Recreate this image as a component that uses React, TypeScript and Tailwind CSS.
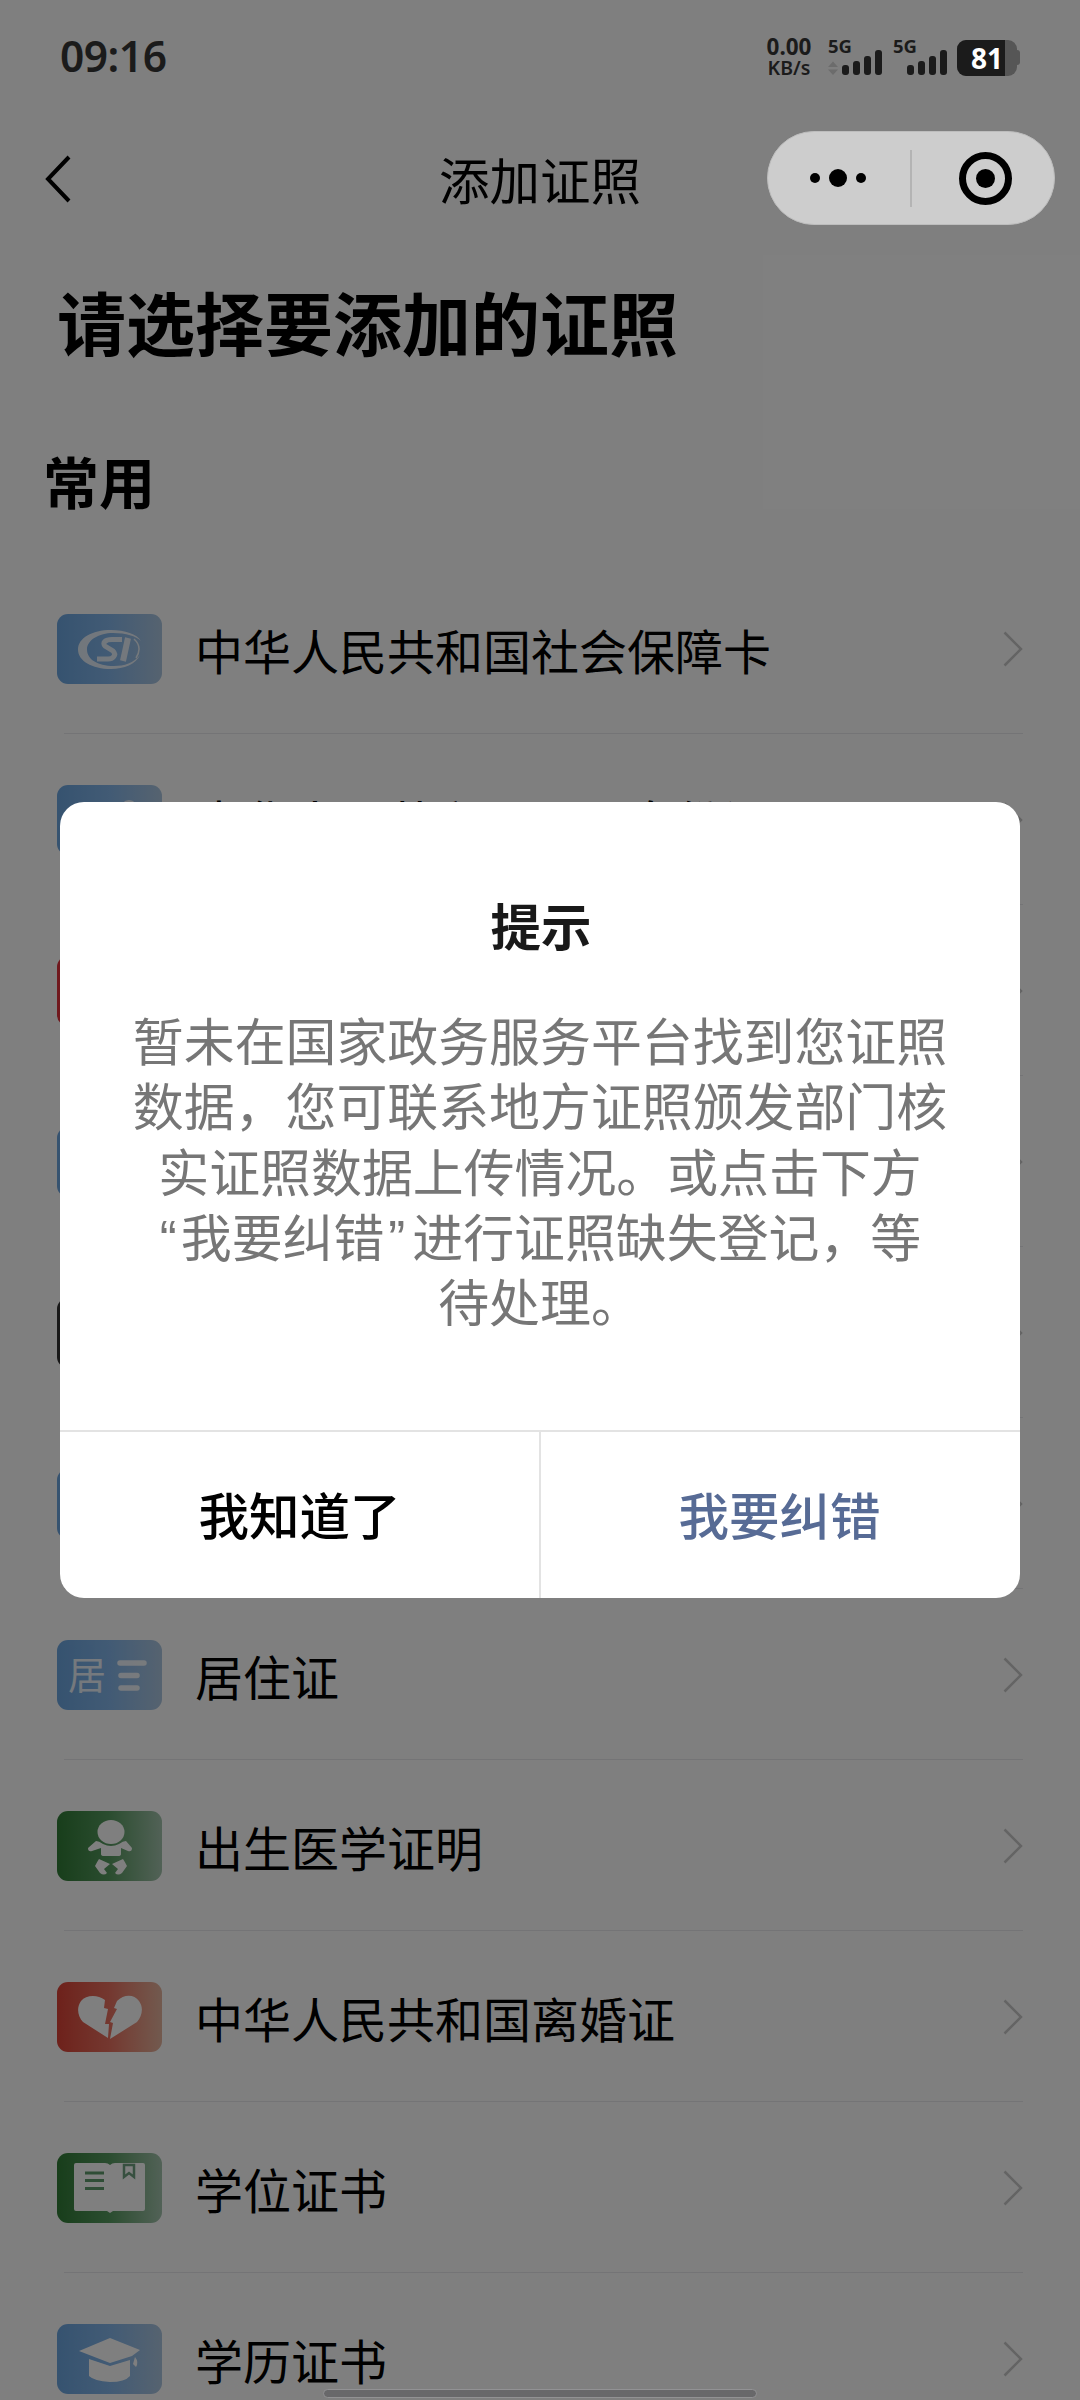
import type { ReactNode } from "react";

type Doc = {
    label: string;
    tile: string;
    icon?: ReactNode;
};

const BLUE = "bg-gradient-to-r from-[#6ca6e0] via-[#84b6ea] to-[#acc6e0]";
const GREEN = "bg-gradient-to-r from-[#307c36] via-[#569a60] to-[#a4c4ae]";
const RED = "bg-gradient-to-r from-[#dc4236] via-[#e87060] to-[#e4b49e]";

function SocialCardIcon() {
    return (
        <svg viewBox="0 0 105 70" className="h-full w-full opacity-80">
            <path
                fill="#fff"
                fillRule="evenodd"
                d="M84 27C80 20 68 16 54 16C35 16 21 24 21 35.500C21 47 35 55 54 55C67 55 79 50 83 41C77 49 67 52 57 52C40 52 30 45 30 35.500C30 26 42 19 56 19C69 19 79 22 84 27Z"
            />
            <path
                fill="none"
                stroke="#fff"
                strokeWidth="5"
                d="M65 25.500H55C48 25.500 45 29 48 32L56 37C60 41 56 45 51 45H40"
            />
            <path fill="none" stroke="#fff" strokeWidth="6" d="M71 24L66 47" />
            <path fill="none" stroke="#fff" strokeWidth="1.500" d="M77 25Q86 33 79 44" />
        </svg>
    );
}

function IdCardIcon() {
    return (
        <svg viewBox="0 0 105 70" className="h-full w-full opacity-80">
            <circle cx="72" cy="24" r="9" fill="#fff" />
        </svg>
    );
}

function ResidenceIcon() {
    return (
        <div className="flex h-full w-full items-center pl-[11px] opacity-85">
            <span className="-mt-[4px] text-[38px] leading-none text-white">居</span>
            <svg viewBox="0 0 32 34" className="ml-[10px] h-[34px] w-[32px]">
                <path stroke="#fff" strokeWidth="5.500" strokeLinecap="round" d="M4 5H28M5 17.500H21M5 30H21" />
            </svg>
        </div>
    );
}

function BabyIcon() {
    return (
        <svg viewBox="0 0 105 70" className="h-full w-full" fill="#fff">
            <ellipse cx="54" cy="21" rx="13.500" ry="12" />
            <path d="M31 37L39 30Q42 30 46 33Q54 37 62 33Q66 30 69 30L75 37Q75 41 71 40L64 37V43Q64 45 61 45H47Q44 45 44 43V37L35 40Q31 41 31 37Z" />
            <path d="M42 48L53 53L47 58L50 62Q47 65 43 62L38 55Q40 51 42 48ZM66 48L55 53L61 58L58 62Q61 65 65 62L70 55Q68 51 66 48Z" />
        </svg>
    );
}

function BrokenHeartIcon() {
    return (
        <svg viewBox="0 0 105 70" className="h-full w-full" fill="#fff">
            <path d="M48 18C40 12 29 13 24 19C19 26 21 35 26 40L51 56L52 42H48L51 27L47 26Z" />
            <path d="M60 19C67 12 77 12 82 19C87 26 85 34 80 40L53 57L56 41L53 40L60 27L57 26Z" />
        </svg>
    );
}

function DegreeIcon() {
    return (
        <svg viewBox="0 0 105 70" className="h-full w-full">
            <path
                fill="#fff"
                d="M19 10H48Q51 10 53 12Q55 10 58 10H86Q88 10 88 12V56Q88 58 86 58H56L53 60L50 58H19Q17 58 17 56V12Q17 10 19 10Z"
            />
            <path fill="none" stroke="#5f9a6c" strokeWidth="3" d="M28 20H47M28 27.500H47M28 35.500H47" />
            <path fill="none" stroke="#6fa080" strokeWidth="2.500" d="M67 12H77V24L72 20L67 24Z" />
        </svg>
    );
}

function GraduationIcon() {
    return (
        <svg viewBox="0 0 105 70" className="h-full w-full" fill="#fff">
            <path d="M53 14L83 26L75 32L53 39L22 27Z" />
            <path d="M32 35L53 42L73 36V52Q68 58 53 58Q37 57 32 52Z" />
            <path d="M78 33Q82 38 79 43L76 40Z" />
        </svg>
    );
}

const DOCS: Doc[] = [
    { label: "中华人民共和国社会保障卡", tile: BLUE, icon: <SocialCardIcon /> },
    { label: "中华人民共和国居民身份证", tile: BLUE, icon: <IdCardIcon /> },
    { label: "", tile: "bg-[#e0303a]" },
    { label: "", tile: BLUE },
    { label: "", tile: "bg-[#303030]" },
    { label: "", tile: BLUE },
    { label: "居住证", tile: BLUE, icon: <ResidenceIcon /> },
    { label: "出生医学证明", tile: GREEN, icon: <BabyIcon /> },
    { label: "中华人民共和国离婚证", tile: RED, icon: <BrokenHeartIcon /> },
    { label: "学位证书", tile: GREEN, icon: <DegreeIcon /> },
    { label: "学历证书", tile: BLUE, icon: <GraduationIcon /> },
];

function DocRow({ doc }: { doc: Doc }) {
    return (
        <li className="h-[171px] shrink-0 px-[57px]">
            <div className="flex h-[168px] items-center">
                <div className={`h-[70px] w-[105px] shrink-0 overflow-hidden rounded-[11px] ${doc.tile}`}>{doc.icon}</div>
                <span className="ml-[33px] flex-1 text-[48px] leading-[70px] whitespace-nowrap">{doc.label}</span>
                <svg viewBox="0 0 20 36" className="h-[36px] w-[20px]">
                    <path d="M1.500 1.500L18 18L1.500 34.500" fill="none" stroke="#c8c8c8" strokeWidth="2.500" />
                </svg>
            </div>
            <div className="ml-[7px] h-px bg-[#e8e8ec]" />
        </li>
    );
}

function Signal({ activity }: { activity?: boolean }) {
    return (
        <div className="w-[65px]">
            <div className="h-[12px] text-[18.500px] leading-[12px] font-bold">5G</div>
            <svg viewBox="0 0 56 26" className="-mt-[3px] h-[26px] w-[56px]" fill="#1b1b1b">
                {activity && <path d="M0 18L5 12.500L10 18ZM0 20.500L5 26L10 20.500Z" fill="#6c6c6c" />}
                <rect x="14" y="16" width="7" height="10" rx="3" />
                <rect x="25" y="12" width="7" height="14" rx="3" />
                <rect x="36" y="7" width="7" height="19" rx="3" />
                <rect x="47" y="1" width="7" height="25" rx="3" />
            </svg>
        </div>
    );
}

function StatusBar() {
    return (
        <div className="flex h-[114px] items-start pl-[60px] font-['Noto_Sans',sans-serif] text-[#1b1b1b]">
            <div className="mt-[33px] text-[42.500px] leading-[46px] font-semibold tracking-[-0.500px]">09:16</div>
            <div className="mt-[38px] ml-auto flex pr-[60px]">
                <div className="w-[46px] text-center whitespace-nowrap">
                    <div className="-mx-2 text-[22.500px] leading-[17px] font-bold">0.00</div>
                    <div className="-mx-2 mt-[4px] text-[19.500px] leading-[17px] font-semibold">KB/s</div>
                </div>
                <div className="mt-[2px] ml-[16px] flex">
                    <Signal activity />
                    <Signal />
                </div>
                <div className="mt-px -ml-px flex items-center">
                    <div className="flex h-[36px] w-[60px] items-center overflow-hidden rounded-[9px] bg-[#565656]">
                        <div className="flex h-full w-[48px] items-center bg-[#1b1b1b] pl-[14px] text-[28px] leading-none font-bold text-white">
                            81
                        </div>
                    </div>
                    <div className="h-[15px] w-[3px] rounded-r-[3px] bg-[#565656]" />
                </div>
            </div>
        </div>
    );
}

function Capsule() {
    return (
        <div className="flex h-[94px] w-[288px] items-center rounded-full border border-[#bdbdbd] bg-[#cdcdcd]">
            <svg viewBox="0 0 142 92" className="h-[92px] w-[142px]">
                <circle cx="47" cy="46" r="5" />
                <circle cx="70" cy="46" r="9" />
                <circle cx="93" cy="46" r="5" />
            </svg>
            <div className="h-[57px] w-[2px] bg-[#b4b4b4]" />
            <svg viewBox="0 0 142 92" className="h-[92px] w-[142px]">
                <circle cx="73.500" cy="46.500" r="23" fill="none" stroke="#000" strokeWidth="7" />
                <circle cx="73.500" cy="46.500" r="9.500" />
            </svg>
        </div>
    );
}

function Dialog() {
    return (
        <div className="flex h-[796px] w-[960px] flex-col overflow-hidden rounded-[24px] bg-white text-center">
            <div className="flex-1 pt-[86px]">
                <h2 className="pl-[2px] text-[50.500px] leading-[72px] font-bold text-[#191919]">提示</h2>
                <p className="mt-[49px] font-['Noto_Sans','Noto_Sans_CJK_SC',sans-serif] text-[50.900px] leading-[65.300px] whitespace-nowrap text-[#767676]">
                    暂未在国家政务服务平台找到您证照
                    <br />
                    数据，您可联系地方证照颁发部门核
                    <br />
                    实证照数据上传情况。或点击下方
                    <br />
                    <span className="mr-[4px] ml-px font-['Liberation_Sans',sans-serif] leading-none">“</span>我要纠错
                    <span className="mr-[7px] ml-[4px] font-['Liberation_Sans',sans-serif] leading-none">”</span>进行证照缺失登记，等
                    <br />
                    待处理。
                </p>
            </div>
            <div className="flex h-[168px] border-t-2 border-[#e3e3e3] text-[50.500px] font-medium">
                <button className="w-[481px] border-r-2 border-[#e3e3e3] pb-[3px]">我知道了</button>
                <button className="flex-1 pr-[2px] pb-[3px] text-[#576b95]">我要纠错</button>
            </div>
        </div>
    );
}

export default function App() {
    return (
        <div className="relative h-[2400px] w-[1080px] overflow-hidden bg-white font-['Noto_Sans_CJK_SC',sans-serif] text-black">
            {/* Page behind the dialog */}
            <div className="h-full overflow-hidden pt-[114px]">
                <header className="relative flex h-[128px] items-center justify-center">
                    <svg viewBox="0 0 28 48" className="absolute top-[41px] left-[44px] h-[48px] w-[28px]">
                        <path d="M25 2L4 24L25 46" fill="none" stroke="#000" strokeWidth="4" />
                    </svg>
                    <h1 className="text-[50.500px] leading-[72px]">添加证照</h1>
                </header>
                <h2 className="mt-[29px] pl-[57px] text-[69px] leading-[100px] font-bold">请选择要添加的证照</h2>
                <h3 className="mt-[69px] pl-[43px] text-[56px] leading-[80px] font-bold">常用</h3>
                <ul className="mt-[45px] flex flex-col">
                    {DOCS.map((doc, i) => (
                        <DocRow key={i} doc={doc} />
                    ))}
                </ul>
            </div>

            {/* Mask, with system chrome and dialog above it */}
            <div className="absolute inset-0 flex flex-col items-center bg-black/50">
                <div className="w-full">
                    <StatusBar />
                </div>
                <div className="mt-[17px] mr-[25px] self-end">
                    <Capsule />
                </div>
                <div className="mt-[577px]">
                    <Dialog />
                </div>
                <div className="mt-auto mb-[2px] h-[9px] w-[434px] rounded-full border border-[#929294] bg-[#68686a]" />
            </div>
        </div>
    );
}
